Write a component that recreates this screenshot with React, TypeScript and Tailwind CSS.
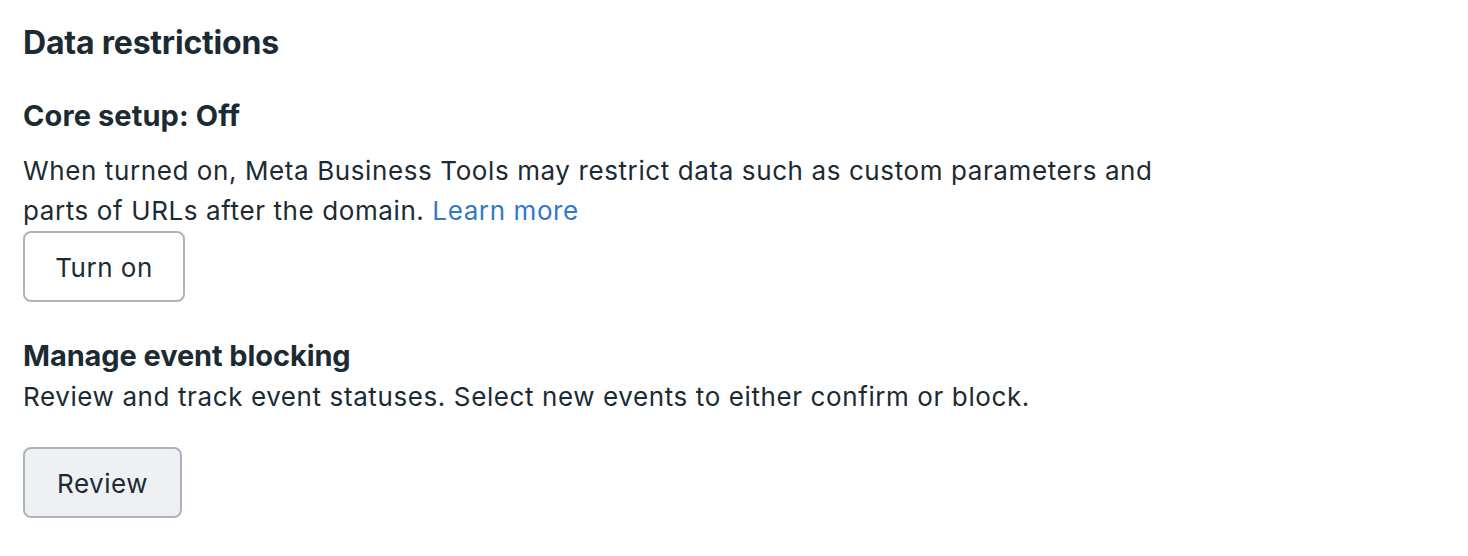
export default function App() {
  return (
    <div className="w-[1468px] h-[556px] bg-white text-[#1c2b33] pl-[23px] pt-[23px]" style={{ fontFamily: "Inter, 'Noto Sans', sans-serif" }}>
      <h2 className="text-[32px] leading-[40px] font-bold tracking-[-0.2px]">Data restrictions</h2>
      <h3 className="mt-[35px] text-[29px] leading-[36px] font-bold tracking-[0.1px]">Core setup: Off</h3>
      <p className="mt-[17px] text-[26px] leading-[40px] tracking-[0.6px] w-[1180px]">
        When turned on, Meta Business Tools may restrict data such as custom parameters and parts of URLs after the domain.{" "}
        <a className="text-[#3578c5]">Learn more</a>
      </p>
      <button className="block h-[71px] w-[162px] rounded-[8px] border-2 border-[#abb3bd] bg-white text-[26px] tracking-[0.5px] pt-[2px]">Turn on</button>
      <h3 className="mt-[36px] text-[29px] leading-[36px] font-bold tracking-[-0.1px]">Manage event blocking</h3>
      <p className="mt-[5px] text-[26px] leading-[36px] tracking-[0.6px]">Review and track event statuses. Select new events to either confirm or block.</p>
      <button className="block mt-[32px] h-[71px] w-[159px] rounded-[8px] border-2 border-[#abb3bd] bg-[#eef0f2] text-[26px] tracking-[0.5px] pt-[2px]">Review</button>
    </div>
  );
}
